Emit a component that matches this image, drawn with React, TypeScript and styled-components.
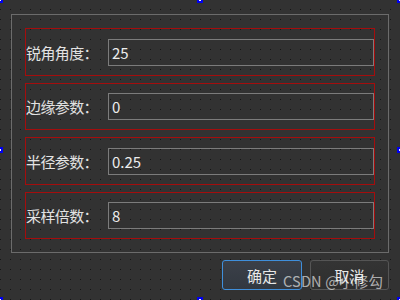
import React from "react";
import styled, { createGlobalStyle } from "styled-components";

const Global = createGlobalStyle`
  html, body { margin: 0; padding: 0; background: #323232; }
  body { font-family: "Noto Sans CJK SC", "Noto Sans", sans-serif; }
`;

const Canvas = styled.div`
  position: relative;
  width: 400px;
  height: 300px;
  box-sizing: border-box;
  overflow: hidden;
  background-color: #323232;
  background-image: radial-gradient(circle at 0.5px 0.5px, #141414 0.75px, transparent 0.9px);
  background-size: 10px 10px;
  background-position: 0 -1px;
  padding: 14px 11px 0 11px;
  display: flex;
  flex-direction: column;
`;

const Frame = styled.div`
  width: 378px;
  height: 239px;
  box-sizing: border-box;
  border: 1px solid #6b6b6b;
  padding: 13px 13px 0 13px;
  display: flex;
  flex-direction: column;
  gap: 7px;
`;

const Row = styled.div<{ $h: number }>`
  height: ${(p) => p.$h}px;
  box-sizing: border-box;
  border: 1px solid #a50d0d;
  display: flex;
  align-items: center;
  padding-left: 0;
`;

const Label = styled.span`
  width: 82px;
  flex: none;
  font-size: 15px;
  color: #e2e2e2;
  letter-spacing: -0.6px;
  white-space: nowrap;
`;

const Input = styled.div`
  flex: 1;
  height: 27px;
  box-sizing: border-box;
  border: 1px solid #7c7c7c;
  display: flex;
  align-items: center;
  padding-left: 3px;
  font-size: 15px;
  color: #ececec;
`;

const Buttons = styled.div`
  display: flex;
  justify-content: flex-end;
  gap: 8px;
  margin-top: 7px;
`;

const Button = styled.div<{ $primary?: boolean }>`
  width: ${(p) => (p.$primary ? 80 : 79)}px;
  height: 30px;
  box-sizing: border-box;
  border-radius: 3px;
  border: 1px solid ${(p) => (p.$primary ? "#3f8fdc" : "#555555")};
  background: ${(p) =>
    p.$primary
      ? "linear-gradient(#3b4049, #323840)"
      : "linear-gradient(#343434, #2e2e2e)"};
  display: flex;
  align-items: center;
  justify-content: center;
  font-size: 15px;
  color: #e8e8e8;
`;

const Watermark = styled.div`
  position: absolute;
  left: 283px;
  top: 270px;
  font-family: "Noto Sans CJK SC", "Noto Sans", sans-serif;
  font-size: 14.5px;
  color: rgba(255, 255, 255, 0.62);
  white-space: nowrap;
  letter-spacing: 0.2px;
`;

const Handle = styled.div<{ $x: number; $y: number }>`
  position: absolute;
  left: ${(p) => p.$x}px;
  top: ${(p) => p.$y}px;
  width: 6px;
  height: 6px;
  box-sizing: border-box;
  border: 2px solid #0000ee;
  background: #ffffff;
`;

const rows = [
  { label: "锐角角度：", value: "25", h: 48 },
  { label: "边缘参数：", value: "0", h: 47 },
  { label: "半径参数：", value: "0.25", h: 48 },
  { label: "采样倍数：", value: "8", h: 47 },
];

const handles = [
  [-3, -3],
  [197, -3],
  [397, -3],
  [-3, 147],
  [397, 147],
  [-3, 297],
  [197, 297],
  [397, 297],
];

export default function App() {
  return (
    <>
      <Global />
      <Canvas>
        <Frame>
          {rows.map((r) => (
            <Row key={r.label} $h={r.h}>
              <Label>{r.label}</Label>
              <Input>{r.value}</Input>
            </Row>
          ))}
        </Frame>
        <Buttons>
          <Button $primary>确定</Button>
          <Button>取消</Button>
        </Buttons>
        <Watermark>CSDN @小修勾</Watermark>
        {handles.map(([x, y], i) => (
          <Handle key={i} $x={x} $y={y} />
        ))}
      </Canvas>
    </>
  );
}
